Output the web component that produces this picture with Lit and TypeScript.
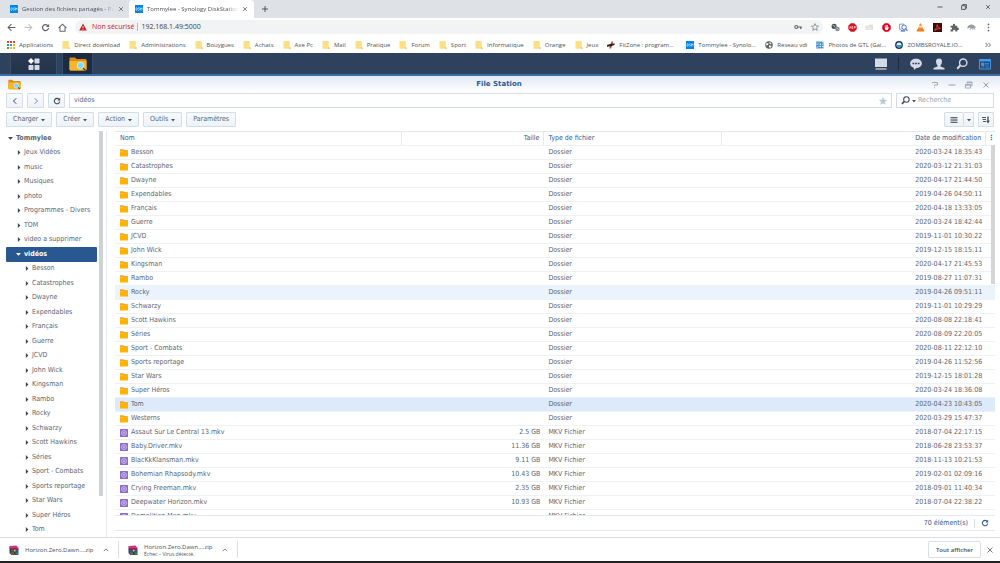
import { LitElement, html, css, svg, TemplateResult } from "lit";
import { customElement, property } from "lit/decorators.js";
import { classMap } from "lit/directives/class-map.js";

const s = (box: string, body: TemplateResult, cls = "") =>
  html`<svg class="ic ${cls}" viewBox="${box}" aria-hidden="true">${body}</svg>`;

const reload = (c: string) => s("0 0 16 16", svg`<path d="M12.6 5.2A5.4 5.4 0 1 0 13.4 9" fill="none" stroke=${c} stroke-width="2.2"/><path d="M14.4 1.6v5.6H8.8z" fill=${c}/>`);
const cross = (c: string) => s("0 0 16 16", svg`<path d="M3 3l10 10M13 3L3 13" fill="none" stroke=${c} stroke-width="1.8"/>`);
const lens = (c: string) => s("0 0 16 16", svg`<circle cx="9.6" cy="6.2" r="4.9" fill="none" stroke=${c} stroke-width="1.9"/><path d="M6 9.6L1.6 14.2" stroke=${c} stroke-width="2.8" fill="none"/>`);
const star = (fill: string, stroke: string) => s("0 0 16 16", svg`<path d="M8 1.3l2 4.6 5 .5-3.8 3.3 1.2 4.9L8 12l-4.400 2.600 1.200-4.900L1 6.400l5-.5z" fill=${fill} stroke=${stroke} stroke-width="1.200" stroke-linejoin="round"/>`);
const up = s("0 0 16 16", svg`<path d="M2 11L8 5l6 6" fill="none" stroke="#5f6368" stroke-width="2.200"/>`);
const folder = s("0 0 16 16", svg`<path d="M0 .5h7l1.500 1.600h6.500v2.500H0z" fill="#f2a33a"/><path d="M0 4.400h6.600l1.500-1.300H16v11q0 1-1 1H1q-1 0-1-1z" fill="#ffb200"/>`);
const video = s("0 0 16 16", svg`<rect width="16" height="16" rx="1" fill="#8f6bc8"/><circle cx="8" cy="8" r="5" fill="none" stroke="#e4d9f5" stroke-width="1.300"/><circle cx="8" cy="8" r="1.900" fill="none" stroke="#e4d9f5" stroke-width="1.200"/>`);
const station = s("0 0 36 28", svg`<path d="M1 3q0-2 2-2h9l3 3h18q2 0 2 2v18q0 3-3 3H4q-3 0-3-3z" fill="#d98f16"/><path d="M1 8h34v16q0 3-3 3H4q-3 0-3-3z" fill="#f8b52c"/><circle cx="23" cy="17" r="6.500" fill="#7fd7f7" stroke="#dff6ff" stroke-width="1.500"/><path d="M28 22l5 5" stroke="#4a4a4a" stroke-width="3"/>`);
const bmFolder = s("0 0 16 16", svg`<path d="M1 0h11.500q1 0 1 1v11l1.500 3.500H2q-1 0-1-1z" fill="#fbdf84"/><path d="M11.500 15.500l2-3.500 2 1.500v2z" fill="#eec65a"/>`);
const dsm = s("0 0 16 16", svg`<rect width="16" height="16" fill="#0086e5"/><path d="M2 5.500v5h1.300q1.500-.3 1.500-2.500T3.300 5.500zM9.600 5.700H7.200q-1 .2-.8 1.100.2.700 1.500 1 1.500.4 1.300 1.700-.2 1-1.400 1H6M11 10.800V5.500l1.500 2.500L14 5.500v5.300" fill="none" stroke="#fff" stroke-width="1"/>`);
const rar = s("0 0 20 20", svg`<path d="M1 2l14-1 4 5H4z" fill="#d8317c"/><path d="M1 2l3 4v13l-3-3z" fill="#5c2c4d"/><path d="M4 6h15v4H4z" fill="#a52a68"/><path d="M4 10.500h15v4H4z" fill="#2d5f9e"/><path d="M4 15h15v4H4z" fill="#2d8a58"/><path d="M4 10.200h15M4 14.700h15M4 19h15" stroke="#161616" stroke-width="1.200"/><path d="M10 6h3v13h-3z" fill="#4b3527"/><path d="M10 9h3v4h-3z" fill="#e5c15a"/>`);

const bookmarkIcons: Record<string, TemplateResult> = {
  folder: bmFolder,
  dsm,
  apps: s("0 0 16 16", svg`${[["#ea4335", 0, 0], ["#ea4335", 6, 0], ["#ea4335", 12, 0], ["#34a853", 0, 6], ["#4285f4", 6, 6], ["#fbbc05", 12, 6], ["#34a853", 0, 12], ["#fbbc05", 6, 12], ["#fbbc05", 12, 12]].map(([c, x, y]) => svg`<rect x=${x} y=${y} width="4" height="4" fill=${c}/>`)}`),
  fit: s("0 0 16 16", svg`<path d="M9 1h3.500L8 15H4.500z" fill="#e23b35"/><path d="M0 8l8-2.500 8-.5-1.500 3L8 10.500l-8 1z" fill="#222"/>`),
  globe: s("0 0 16 16", svg`<circle cx="8" cy="8" r="7.500" fill="#5f6368"/><path d="M3 4l4 1-1 3-3 1-1-2zM9 2l4 2.500-2 2-2-1zM8 9l4 0 1 2-3 3-2-2z" fill="#fff"/>`),
  photo: s("0 0 16 16", svg`<path d="M0 0h16v16H0z" fill="#cfe3f3"/><path d="M2 1v14M6 0v16M11 1v14M0 4h15M1 9h14M4 13h11M8 2l7 5M0 12l8-7" stroke="#2b7fc0" stroke-width="1.400"/>`),
  zomb: s("0 0 16 16", svg`<circle cx="8" cy="8" r="7.800" fill="#12395e"/><circle cx="8" cy="8" r="5" fill="#e9f4fb"/><path d="M3.500 8h9A4.500 4.500 0 0 1 3.500 8z" fill="#2b8fd0"/>`),
};

const extensions: TemplateResult[] = [
  s("0 0 16 16", svg`<circle cx="5.500" cy="6" r="4.500" fill="#4b4f54"/><circle cx="11.500" cy="10.500" r="4" fill="#85898e"/><path d="M3 4l3 1 1 3M10 9l3 3" stroke="#fff" fill="none"/>`),
  s("0 0 16 16", svg`<path d="M5 .5h6L15.500 5v6L11 15.500H5L.5 11V5z" fill="#d9101c"/><path d="M2.500 10L4 6l1.500 4M7 6v4h1.500q1-1 0-2 .8-1 0-2zM11.500 10V6H13q1.200 1 0 2h-1.500" stroke="#fff" fill="none"/>`),
  s("0 0 16 16", svg`<path d="M1 5h6V3h7v9H1z" fill="#d9dadc"/><path d="M3 7h9M3 10h9" stroke="#fff"/>`),
  s("0 0 16 16", svg`<path d="M5 .5h6L15.500 5v6L11 15.500H5L.5 11V5z" fill="#e0001b"/><path d="M5 4.500h1.300V8H7V3h1.300v5H9V3.500h1.300V8.500l1.500-1 .7.700L10 12.500H6.500L5 10.500z" fill="#fff"/>`),
  s("0 0 16 16", svg`<path d="M1 2h8M1 2v9h4" stroke="#6d8cc9" stroke-width="1.500" fill="none"/><circle cx="9" cy="7.500" r="4" fill="none" stroke="#3c66b8" stroke-width="1.600"/><path d="M12 10.500l3 3.500M3 14h8" stroke="#3c66b8" stroke-width="1.800"/>`),
  s("0 0 16 16", svg`<path d="M7 1h2l4 11H3z" fill="#f68b1f"/><path d="M5.700 5h4.600l1 3H4.700z" fill="#fbe3c6"/><path d="M2 11h12l1 4H1z" fill="#ee7d12"/>`),
  s("0 0 16 16", svg`<rect width="16" height="16" fill="#3a0d0d"/><path d="M3 13q5-5 4.500-10Q9 9 13 10 8 9.500 3 13z" fill="none" stroke="#f04a3e" stroke-width="1.600"/>`),
  s("0 0 16 16", svg`<path d="M1 5h4V3.500a2 2 0 0 1 4 0V5h4v3.500h1a2 2 0 0 1 0 4h-1V15H9.500v-1a2 2 0 0 0-4 0v1H1v-3.500h1a1.600 1.600 0 0 0 0-3.500H1z" fill="#5f6368"/>`),
];

@customElement("browser-chrome")
export class BrowserChrome extends LitElement {
  static styles = css`
    :host { display: block; font: 6px/8px "Open Sans", "Noto Sans", sans-serif; color: #4d5156; }
    .ic { width: 8px; height: 8px; display: block; flex: none; }
    button { all: unset; display: flex; align-items: center; justify-content: center; flex: none; cursor: pointer; }
    .tabs { display: flex; height: 18px; background: #dee1e6; align-items: stretch; }
    .tab { display: flex; align-items: center; gap: 4px; width: 125px; box-sizing: border-box; padding: 0 6px; }
    .tab.on { background: #fff; border-radius: 4px 4px 0 0; }
    .tab.first { width: 129px; padding: 0 5px 0 10px; }
    .name { flex: 1; white-space: nowrap; overflow: hidden; mask-image: linear-gradient(90deg, #000 88%, transparent); }
    .tab button .ic, .win .ic { width: 6px; height: 6px; }
    .new { width: 22px; }
    .win { margin-left: auto; display: flex; width: 72px; justify-content: space-around; height: 14px; }
    .bar { display: flex; align-items: center; height: 18px; background: #fff; padding: 0 7px; gap: 8px; }
    .bar .ic { width: 9px; height: 9px; }
    .url { flex: 1; display: flex; align-items: center; height: 14px; border-radius: 7px; background: #f1f3f4; padding: 0 4px; gap: 3px; font-size: 7px; margin-right: 1px; margin-left: -1px; }
    .url { margin: 0; }
    .warn { color: #c5221f; padding-left: 2px; }
    .bar .url .ic { width: 8px; height: 8px; }
    .sep { width: 1px; height: 8px; background: #b5b8bc; }
    .url input { all: unset; flex: 1; color: #3c4043; }
    .grow { display: flex; gap: 9px; align-items: center; }
    .marks { display: flex; align-items: center; height: 17px; background: #fff; padding: 0 8px 0 7px; color: #4d5156; }
    .marks a { display: flex; align-items: center; gap: 4px; color: inherit; text-decoration: none; white-space: nowrap; }
    .marks .long { min-width: 58px; }
    .marks nav { display: flex; flex: 1; gap: 9px; min-width: 0; }
  `;
  render() {
    const marks: [string, string][] = [["apps", "Applications"], ["folder", "Direct download"], ["folder", "Administrations"], ["folder", "Bouygues"], ["folder", "Achats"], ["folder", "Axe Pc"], ["folder", "Mail"], ["folder", "Pratique"], ["folder", "Forum"], ["folder", "Sport"], ["folder", "Informatique"], ["folder", "Orange"], ["folder", "Jeux"], ["fit", "FitZone : program..."], ["dsm", "Tommylee - Synolo..."], ["globe", "Reseau vdi"], ["photo", "Photos de GTL (Gai..."], ["zomb", "ZOMBSROYALE.IO..."]];
    return html`
      <div class="tabs">
        <div class="tab first">${dsm}<span class="name">Gestion des fichiers partagés - Pa</span><button aria-label="Fermer l'onglet">${cross("#45494d")}</button></div>
        <div class="tab on">${dsm}<span class="name">Tommylee - Synology DiskStation</span><button aria-label="Fermer l'onglet">${cross("#45494d")}</button></div>
        <button class="new" aria-label="Nouvel onglet">${s("0 0 16 16", svg`<path d="M8 2v12M2 8h12" stroke="#45494d" stroke-width="1.800"/>`)}</button>
        <div class="win">
          <button aria-label="Réduire">${s("0 0 16 16", svg`<path d="M1 8h14" stroke="#333" stroke-width="2"/>`)}</button>
          <button aria-label="Restaurer">${s("0 0 16 16", svg`<path d="M1.500 4.500h10v10h-10zM4.500 4V1.500h10v10H12" fill="none" stroke="#333" stroke-width="2"/>`)}</button>
          <button aria-label="Fermer">${cross("#333")}</button>
        </div>
      </div>
      <div class="bar">
        <button aria-label="Précédent">${s("0 0 16 16", svg`<path d="M15 8H2M8 2L2 8l6 6" fill="none" stroke="#5f6368" stroke-width="1.800"/>`)}</button>
        <button aria-label="Suivant">${s("0 0 16 16", svg`<path d="M1 8h13M8 2l6 6-6 6" fill="none" stroke="#bdc0c4" stroke-width="1.800"/>`)}</button>
        <button aria-label="Actualiser">${reload("#5f6368")}</button>
        <button aria-label="Accueil">${s("0 0 16 16", svg`<path d="M1 9l7-7 7 7M3.500 8v6.500h9V8" fill="none" stroke="#5f6368" stroke-width="1.800"/>`)}</button>
        <div class="url">
          ${s("0 0 16 16", svg`<path d="M8 1l7.500 14H.5z" fill="#c5221f"/><path d="M8 6v4.500M8 12v1.500" stroke="#fff" stroke-width="1.600"/>`)}
          <span class="warn">Non sécurisé</span><span class="sep"></span>
          <input aria-label="Adresse" value="192.168.1.49:5000" />
          <span class="grow">
            ${s("0 0 16 16", svg`<circle cx="4.500" cy="8" r="3" fill="none" stroke="#5f6368" stroke-width="2.200"/><path d="M8 8h8M13.500 8v4" stroke="#5f6368" stroke-width="2.400"/>`)}
            ${star("none", "#5f6368")}
          </span>
        </div>
        ${extensions.map((e) => html`<button aria-label="Extension">${e}</button>`)}
        <button aria-label="Profil">${s("0 0 18 16", svg`<path d="M0 10Q2 2 9 2q6 0 9 7l-3-1 2 6-4-5-1 5-2-5-5 5 2-6z" fill="#9a9da1"/>`)}</button>
        <button aria-label="Menu">${s("0 0 16 16", svg`<circle cx="8" cy="2.500" r="1.500" fill="#5f6368"/><circle cx="8" cy="8" r="1.500" fill="#5f6368"/><circle cx="8" cy="13.500" r="1.500" fill="#5f6368"/>`)}</button>
      </div>
      <div class="marks">
        <nav>${marks.map(([i, t]) => html`<a href="#">${bookmarkIcons[i]}<span class=${classMap({ long: t.endsWith("...") })}>${t}</span></a>`)}</nav>
        <button aria-label="Autres favoris">${s("0 0 16 16", svg`<path d="M3 4l4 4-4 4M9 4l4 4-4 4" fill="none" stroke="#45494d" stroke-width="1.600"/>`)}</button>
      </div>`;
  }
}

@customElement("dsm-taskbar")
export class DsmTaskbar extends LitElement {
  static styles = css`
    :host { display: flex; align-items: center; height: 21px; background: #2e415d; border-bottom: 2px solid #3b6ea8; box-sizing: content-box; }
    button { all: unset; display: flex; align-items: center; justify-content: center; height: 21px; }
    .menu, .app { background: linear-gradient(#2a3a52, #22334b); border: 1px solid #3a4e6b; border-width: 0 1px; }
    .menu { width: 45px; margin-left: 10px; }
    .app { width: 29px; margin-left: 5px; background: #1c2b42; }
    .ic { display: block; width: 12px; height: 12px; }
    .app .ic { width: 18px; height: 14px; }
    .right { margin-left: auto; display: flex; gap: 11px; padding-right: 9px; }
    .rule { width: 1px; height: 13px; align-self: center; background: #1d2b40; }
  `;
  render() {
    const c = "#d3dbe6";
    return html`
      <button class="menu" aria-label="Menu principal">${s("0 0 24 24", svg`<path d="M6 0l6 6-6 6-6-6z" fill="#fff"/><rect x="13" y="1" width="10" height="10" rx="1.500" fill=${c}/><rect x="1" y="14" width="10" height="10" rx="1.500" fill=${c}/><rect x="13" y="14" width="10" height="10" rx="1.500" fill=${c}/>`)}</button>
      <button class="app" aria-label="File Station">${station}</button>
      <div class="right">
        <button aria-label="Bureau">${s("0 0 24 24", svg`<path d="M0 1h24v17H0z" fill=${c}/><path d="M1 21h22v2H1z" fill="#fff"/>`)}</button>
        <span class="rule"></span>
        <button aria-label="Notifications">${s("0 0 24 24", svg`<path d="M12 1.500c6.600 0 11.700 4 11.700 9.300S18.600 20 12.500 20L8 24l-.6-4.700C3.200 18 .3 15 .3 10.800.3 5.500 5.400 1.500 12 1.500z" fill=${c}/><path d="M5 9.500h3.500v3H5zM10.300 9.500h3.500v3h-3.500zM15.600 9.500h3.500v3h-3.500z" fill="#2e415d"/>`)}</button>
        <button aria-label="Options">${s("0 0 24 24", svg`<path d="M12 1q6 0 6 6 0 5-3 8v2l8 3v3H1v-3l8-3v-2Q6 12 6 7q0-6 6-6z" fill=${c}/>`)}</button>
        <button aria-label="Rechercher">${lens(c)}</button>
        <button aria-label="Widgets">${s("0 0 24 24", svg`<path d="M1 3h22v19H1z" fill="none" stroke="#3a9bf5" stroke-width="2"/><path d="M1 3h22v4H1z" fill="#3a9bf5"/><path d="M5 10h5v5H5zM12 11h8M12 14h8M5 18h6M13 18h7" fill="#3a9bf5" stroke="#3a9bf5" stroke-width="1.600"/>`)}</button>
      </div>`;
  }
}

@customElement("folder-tree")
export class FolderTree extends LitElement {
  @property({ attribute: false }) shares: string[] = [];
  @property({ attribute: false }) folders: string[] = [];
  static styles = css`
    :host { display: flex; overflow: hidden; }
    ul { flex: 1; min-width: 0; list-style: none; margin: 0; padding: 0; display: grid; grid-auto-rows: 1fr; }
    li { display: flex; align-items: center; gap: 3px; border-radius: 1px; white-space: nowrap; overflow: hidden; line-height: 9px; }
    .root { padding-left: 2px; font-weight: bold; }
    .sub { padding-left: 10px; }
    .leaf { padding-left: 18px; }
    .on { background: #28588f; color: #fff; font-weight: bold; }
    .ic { width: 5px; height: 5px; flex: none; }
    .bar { width: 4px; height: 365px; max-height: 100%; margin-left: 2px; background: #cfd2d4; }
  `;
  render() {
    const right = s("0 0 8 8", svg`<path d="M3 0l4 4-4 4z" fill="#3c4654"/>`);
    const down = (c: string) => s("0 0 8 8", svg`<path d="M0 1.500h8L4 6z" fill=${c}/>`);
    return html`
      <ul>
        <li class="root">${down("#3c4654")}Tommylee</li>
        ${this.shares.map((n) => html`<li class="sub">${right}${n}</li>`)}
        <li class="sub on">${down("#fff")}vidéos</li>
        ${this.folders.map((n) => html`<li class="leaf">${right}${n}</li>`)}
      </ul>
      <div class="bar"></div>`;
  }
}

type Row = { name: string; size?: string; date: string; state?: "hover" | "selected" };

@customElement("file-list")
export class FileListView extends LitElement {
  @property({ attribute: false }) rows: Row[] = [];
  static styles = css`
    :host { display: flex; flex-direction: column; min-height: 0; }
    .view { flex: 1; min-height: 0; overflow: hidden; border-bottom: 1px solid #e3e9ef; display: flex; position: relative; }
    table { width: 100%; border-collapse: separate; border-spacing: 0; table-layout: fixed; align-self: flex-start; }
    th, td { box-sizing: border-box; padding: 0 4px; height: 14px; line-height: 9px; text-align: left; font-weight: normal; white-space: nowrap; border-bottom: 1px solid #eef2f6; }
    th { color: #2d5c94; height: 15px; border-top: 1px solid #e3e9ef; border-right: 1px solid #e3e9ef; }
    th:first-child, td:first-child { padding-left: 5px; }
    th:last-child { border-right: 0; padding: 0 0 0 2px; font-weight: bold; }
    .n { width: 32.6%; } .s { width: 16.2%; } .t { width: 20.2%; } .m { width: 1%; }
    .r { text-align: right; }
    .name { display: flex; align-items: center; gap: 3px; }
    .ic { width: 8px; height: 8px; flex: none; }
    .hover td { background: #ebf3fd; }
    .selected td { background: #dceafb; }
    .thumb { position: absolute; right: 0; top: 14px; width: 4px; height: 139px; background: #d2d4d6; }
    .foot { display: flex; align-items: center; justify-content: flex-end; gap: 6px; height: 14px; padding-right: 6px; color: #2d5c94; border-bottom: 1px solid #e3e9ef; margin-bottom: 6px; }
    .foot i { width: 1px; height: 9px; background: #d5dde6; }
    .foot button { all: unset; display: flex; }
  `;
  render() {
    return html`
      <div class="view">
        <table>
          <thead><tr><th class="n">Nom</th><th class="s r">Taille</th><th class="t">Type de fichier</th><th class="r">Date de modification</th><th class="m">⋮</th></tr></thead>
          <tbody>
            ${this.rows.map((r) => html`<tr class=${classMap({ hover: r.state === "hover", selected: r.state === "selected" })}>
              <td><span class="name">${r.size ? video : folder}${r.name}</span></td>
              <td class="r">${r.size ?? ""}</td><td>${r.size ? "MKV Fichier" : "Dossier"}</td><td class="r">${r.date}</td><td></td></tr>`)}
          </tbody>
        </table>
        <div class="thumb"></div>
      </div>
      <div class="foot"><span>70 élément(s)</span><i></i><button aria-label="Actualiser">${reload("#2d5c94")}</button></div>`;
  }
}

const subfolders = ["Besson", "Catastrophes", "Dwayne", "Expendables", "Français", "Guerre", "JCVD", "John Wick", "Kingsman", "Rambo", "Rocky", "Schwarzy", "Scott Hawkins", "Séries", "Sport - Combats", "Sports reportage", "Star Wars", "Super Héros", "Tom"];
const folderDates = ["2020-03-24 18:35:43", "2020-03-12 21:31:03", "2020-04-17 21:44:50", "2019-04-26 04:50:11", "2020-04-18 13:33:05", "2020-03-24 18:42:44", "2019-11-01 10:30:22", "2019-12-15 18:15:11", "2020-04-17 21:45:53", "2019-08-27 11:07:31", "2019-04-26 09:51:11", "2019-11-01 10:29:29", "2020-08-08 22:18:41", "2020-08-09 22:20:05", "2020-08-11 22:12:10", "2019-04-26 11:52:56", "2019-12-15 18:01:28", "2020-03-24 18:36:08", "2020-04-23 10:43:05", "2020-03-29 15:47:37"];
const rows: Row[] = [
  ...[...subfolders, "Westerns"].map((name, i): Row => ({ name, date: folderDates[i], state: name === "Rocky" ? "hover" : name === "Tom" ? "selected" : undefined })),
  { name: "Assaut Sur Le Central 13.mkv", size: "2.5 GB", date: "2018-07-04 22:17:15" },
  { name: "Baby.Driver.mkv", size: "11.36 GB", date: "2018-06-28 23:53:37" },
  { name: "BlacKkKlansman.mkv", size: "9.11 GB", date: "2018-11-13 10:21:53" },
  { name: "Bohemian Rhapsody.mkv", size: "10.43 GB", date: "2019-02-01 02:09:16" },
  { name: "Crying Freeman.mkv", size: "2.35 GB", date: "2018-09-01 11:40:34" },
  { name: "Deepwater Horizon.mkv", size: "10.93 GB", date: "2018-07-04 22:38:22" },
  { name: "Demolition Man.mkv", size: " ", date: "" },
];

@customElement("app-root")
export class AppRoot extends LitElement {
  static styles = css`
    :host { display: flex; flex-direction: column; height: 100vh; overflow: hidden; background: #fff; font: 7px/9px "DejaVu Sans Condensed", "DejaVu Sans", sans-serif; color: #5b6570; }
    button { all: unset; box-sizing: border-box; display: flex; align-items: center; justify-content: center; }
    .ic { width: 8px; height: 8px; display: block; flex: none; }
    .title { display: grid; grid-template-columns: 1fr auto 1fr; align-items: center; height: 17px; padding: 0 10px 0 8px; background: linear-gradient(#e3eaf4, #fff); }
    .title h1 { margin: 0; font: bold 7px/9px "DejaVu Sans", sans-serif; color: #2d5c94; }
    .title .ic { width: 13px; height: 11px; }
    .ctl { display: flex; justify-content: flex-end; gap: 9px; }
    .ctl .ic { width: 8px; height: 8px; }
    .row { display: flex; align-items: center; padding: 0 6px; height: 15px; }
    .nav { gap: 4px; }
    .tools { gap: 4px; margin: 4px 0; }
    .b { height: 15px; border: 1px solid #d3dde8; border-radius: 1px; background: linear-gradient(#f8fafc, #eef3f9); padding: 0 6px; gap: 3px; }
    .nav .b { width: 17px; padding: 0; }
    .field { display: flex; align-items: center; box-sizing: border-box; height: 15px; border: 1px solid #d3dde8; padding: 0 4px; gap: 2px; }
    .path { flex: 1; }
    .find { width: 98px; }
    .find .ic { width: 9px; height: 9px; }
    input { all: unset; flex: 1; min-width: 0; }
    input::placeholder { color: #9aa4ae; }
    .ic.caret, .find .caret { width: 4px; height: 4px; }
    .push { margin-left: auto; display: flex; }
    .push .b { width: 20px; padding: 0; }
    .push .b + .b { width: 10px; border-left: 0; }
    .b.sort { width: 16px; padding: 0; }
    .main { flex: 1; min-height: 0; display: grid; grid-template-columns: 97px 1fr; padding: 0 5px 0 6px; }
    file-list { border-left: 1px solid #e6e9ed; margin-left: 3px; padding-left: 8px; }
    .dl { display: flex; align-items: center; height: 26px; border-top: 1px solid #dcdfe2; border-bottom: 2px solid #222; box-sizing: border-box; padding-right: 6px; font: 6px/8px "Open Sans", sans-serif; color: #4d5156; }
    .item { display: flex; align-items: center; gap: 6px; width: 119px; box-sizing: border-box; padding: 0 9px; height: 17px; border-right: 1px solid #dcdfe2; }
    .item span { flex: 1; white-space: nowrap; }
    .item .rar { flex: none; }
    .item small { display: block; font-size: 5px; line-height: 6px; }
    .item .ic { width: 6px; height: 6px; }
    .item .rar .ic { width: 10px; height: 10px; }
    .all { margin-left: auto; border: 1px solid #dcdfe2; border-radius: 2px; height: 17px; padding: 0 7px; font-weight: 600; margin-right: 5px; }
  `;
  render() {
    const caret = s("0 0 8 8", svg`<path d="M0 2h8L4 7z" fill="#4b5561"/>`, "caret");
    const g = "#8f99a5";
    return html`
      <browser-chrome></browser-chrome>
      <dsm-taskbar></dsm-taskbar>
      <div class="title">
        ${station}<h1>File Station</h1>
        <div class="ctl">
          <button aria-label="Aide">${s("0 0 16 16", svg`<path d="M2 3h11v5H7v2M7 12.500v2" fill="none" stroke=${g} stroke-width="1.600"/>`)}</button>
          <button aria-label="Réduire">${s("0 0 16 16", svg`<path d="M1 8h14" stroke=${g} stroke-width="1.800"/>`)}</button>
          <button aria-label="Restaurer">${s("0 0 16 16", svg`<path d="M1 7h10v7H1zM1 8.500h10M4 5V2h10v8h-2M4 3.500h10" fill="none" stroke=${g} stroke-width="1.500"/>`)}</button>
          <button aria-label="Fermer">${cross(g)}</button>
        </div>
      </div>
      <div class="row nav">
        <button class="b" aria-label="Précédent">${s("0 0 16 16", svg`<path d="M10.500 2.500L5 8l5.500 5.500" fill="none" stroke="#3c4654" stroke-width="2"/>`)}</button>
        <button class="b" aria-label="Suivant">${s("0 0 16 16", svg`<path d="M5.500 2.500L11 8l-5.500 5.500" fill="none" stroke="#7c8795" stroke-width="2"/>`)}</button>
        <button class="b" aria-label="Actualiser">${reload("#3c4654")}</button>
        <div class="field path"><input aria-label="Chemin" value="vidéos" />${star("#b9c6d5", "#b9c6d5")}</div>
        <div class="field find">${lens("#3c4654")}${caret}<input aria-label="Recherche" placeholder="Recherche" /></div>
      </div>
      <div class="row tools">
        ${["Charger", "Créer", "Action", "Outils"].map((t) => html`<button class="b">${t}${caret}</button>`)}
        <button class="b">Paramètres</button>
        <div class="push">
          <button class="b" aria-label="Affichage">${s("0 0 16 16", svg`<path d="M1 3h14M1 6.300h14M1 9.600h14M1 13h14" stroke="#4b5561" stroke-width="1.800"/>`)}</button>
          <button class="b" aria-label="Choisir l'affichage">${caret}</button>
        </div>
        <button class="b sort" aria-label="Trier">${s("0 0 16 16", svg`<path d="M0 3h8M1 7h7M2 11h6" stroke="#3c4654" stroke-width="1.800"/><path d="M12 1v11" stroke="#3c4654" stroke-width="2.600"/><path d="M8.500 9.500h7L12 15z" fill="#3c4654"/>`)}</button>
      </div>
      <div class="main">
        <folder-tree .shares=${["Jeux Vidéos", "music", "Musiques", "photo", "Programmes - Divers", "TOM", "video a supprimer"]} .folders=${subfolders}></folder-tree>
        <file-list .rows=${rows}></file-list>
      </div>
      <div class="dl">
        <div class="item"><span class="rar">${rar}</span><span>Horizon.Zero.Dawn....zip</span><button aria-label="Options">${up}</button></div>
        <div class="item"><span class="rar">${rar}</span><span>Horizon.Zero.Dawn....zip<small>Échec – Virus détecté.</small></span><button aria-label="Options">${up}</button></div>
        <button class="all">Tout afficher</button>
        <button aria-label="Fermer">${cross("#5f6368")}</button>
      </div>`;
  }
}
